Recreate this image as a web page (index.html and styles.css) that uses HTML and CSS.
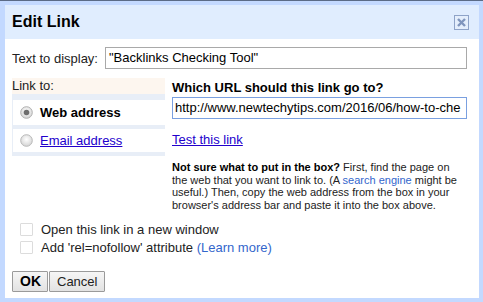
FILE: index.html
```html
<!DOCTYPE html>
<html>
<head>
<meta charset="utf-8">
<link rel="stylesheet" href="styles.css">
</head>
<body>
<div class="dialog">
  <div class="titlebar">
    <span class="title">Edit Link</span>
    <span class="close">
      <svg width="13" height="13" viewBox="0 0 13 13"><path d="M3 3 L10 10 M10 3 L3 10" stroke="#7f95bd" stroke-width="2.4" stroke-linecap="butt"/></svg>
    </span>
  </div>
  <div class="content">
    <div class="row-display">
      <span class="lbl">Text to display:</span>
      <div class="input display-input">"Backlinks Checking Tool"</div>
    </div>
    <div class="linkarea">
      <div class="left">
        <div class="linkto">Link to:</div>
        <div class="tabs">
          <div class="tab">
            <svg class="radio" width="13" height="13" viewBox="0 0 13 13">
              <defs><radialGradient id="g1" cx="50%" cy="40%" r="60%"><stop offset="0" stop-color="#fff"/><stop offset="1" stop-color="#d4d4d4"/></radialGradient></defs>
              <circle cx="6.5" cy="6.5" r="5.8" fill="url(#g1)" stroke="#b0b0b0"/>
              <circle cx="6.5" cy="6.5" r="2.8" fill="#6e6e6e"/>
            </svg>
            <b>Web address</b>
          </div>
          <div class="tab">
            <svg class="radio" width="13" height="13" viewBox="0 0 13 13">
              <defs><radialGradient id="g2" cx="50%" cy="40%" r="60%"><stop offset="0" stop-color="#fff"/><stop offset="1" stop-color="#d4d4d4"/></radialGradient></defs>
              <circle cx="6.5" cy="6.5" r="5.8" fill="url(#g2)" stroke="#b8b8b8"/>
            </svg>
            <a class="lnk">Email address</a>
          </div>
        </div>
      </div>
      <div class="right">
        <div class="q">Which URL should this link go to?</div>
        <div class="input url-input">http://www.newtechytips.com/2016/06/how-to-che</div>
        <a class="lnk test">Test this link</a>
        <p class="help"><b>Not sure what to put in the box?</b> First, find the page on the web that you want to link to. (A <span class="blue">search engine</span> might be useful.) Then, copy the web address from the box in your browser's address bar and paste it into the box above.</p>
      </div>
    </div>
    <div class="checks">
      <div class="chk"><span class="box"></span><span>Open this link in a new window</span></div>
      <div class="chk"><span class="box"></span><span>Add 'rel=nofollow' attribute <span class="blue">(Learn more)</span></span></div>
    </div>
    <div class="buttons">
      <span class="btn ok">OK</span><span class="btn">Cancel</span>
    </div>
  </div>
</div>
</body>
</html>
```

FILE: styles.css
```css
html, body {
  margin: 0;
  padding: 0;
  background: #fff;
}
body {
  width: 483px;
  height: 302px;
  overflow: hidden;
  font-family: "Liberation Sans", Arial, sans-serif;
  font-size: 13px;
  color: #000;
}
.dialog {
  box-sizing: border-box;
  width: 483px;
  height: 302px;
  background: #c3d9ff;
  border-top: 1px solid #5b6b86;
  padding: 4px 4px 4px 5px;
  display: flex;
  flex-direction: column;
}
.titlebar {
  height: 34px;
  background: #e0edfe;
  display: flex;
  align-items: center;
  justify-content: space-between;
  padding: 0 10px 0 7px;
}
.title {
  font-size: 16px;
  font-weight: bold;
  color: #000;
}
.close {
  box-sizing: border-box;
  width: 15px;
  height: 15px;
  border: 1px solid #8ea3c8;
  display: flex;
  align-items: center;
  justify-content: center;
  background: #e4eefc;
}
.content {
  flex: 1;
  background: #fff;
  padding: 8px 12px 0 7px;
}
.row-display {
  display: flex;
  align-items: center;
  gap: 7px;
}
.lbl {
  color: #222;
}
.input {
  box-sizing: border-box;
  height: 22px;
  border: 1px solid #a9a9a9;
  padding: 0 3px;
  line-height: 20px;
  white-space: nowrap;
  overflow: hidden;
  color: #000;
}
.display-input {
  flex: 1;
}
.linkarea {
  display: flex;
  margin-top: 9px;
  gap: 7px;
}
.left {
  width: 153px;
  flex: none;
}
.linkto {
  background: #fdf6ef;
  height: 16px;
  line-height: 16px;
  padding-left: 0;
  color: #222;
}
.tabs {
  background: #e8eef7;
  padding: 6px 0 4px 1px;
  display: flex;
  flex-direction: column;
  gap: 4px;
}
.tab {
  background: #fff;
  height: 25px;
  display: flex;
  align-items: center;
  padding-left: 7px;
  gap: 7px;
}
.tab + .tab {
  height: 23px;
}
.tab b {
  font-size: 13px;
}
.lnk {
  color: #2200cc;
  text-decoration: underline;
}
.right {
  flex: 1;
  display: flex;
  flex-direction: column;
  align-items: flex-start;
}
.q {
  font-weight: bold;
  margin-top: 2px;
  line-height: 15px;
}
.url-input {
  width: 295px;
  height: 22px;
  margin-top: 2px;
  border-color: #7aa0e0;
  padding-left: 2px;
}
.test {
  margin-top: 13px;
}
.help {
  margin: 14px 0 0;
  font-size: 11px;
  line-height: 12.7px;
  color: #222;
  width: 285px;
}
.help b {
  color: #000;
}
.blue {
  color: #3366cc;
}
.checks {
  margin-top: 11px;
  padding-left: 8px;
  display: flex;
  flex-direction: column;
  gap: 5px;
}
.chk {
  display: flex;
  align-items: center;
  gap: 8px;
  height: 13px;
  color: #222;
}
.box {
  box-sizing: border-box;
  width: 13px;
  height: 13px;
  border: 1px solid #dcdcdc;
  border-radius: 1px;
  background: #fff;
}
.buttons {
  margin-top: 17px;
  display: flex;
  gap: 1px;
}
.btn {
  box-sizing: border-box;
  height: 21px;
  border: 1px solid #9a9a9a;
  background: linear-gradient(#f6f6f6, #e2e2e2);
  padding: 0 7px;
  line-height: 19px;
  color: #222;
  border-radius: 1px;
}
.ok {
  font-weight: bold;
  width: 36px;
  text-align: center;
  color: #000;
  font-size: 14px;
}
```
